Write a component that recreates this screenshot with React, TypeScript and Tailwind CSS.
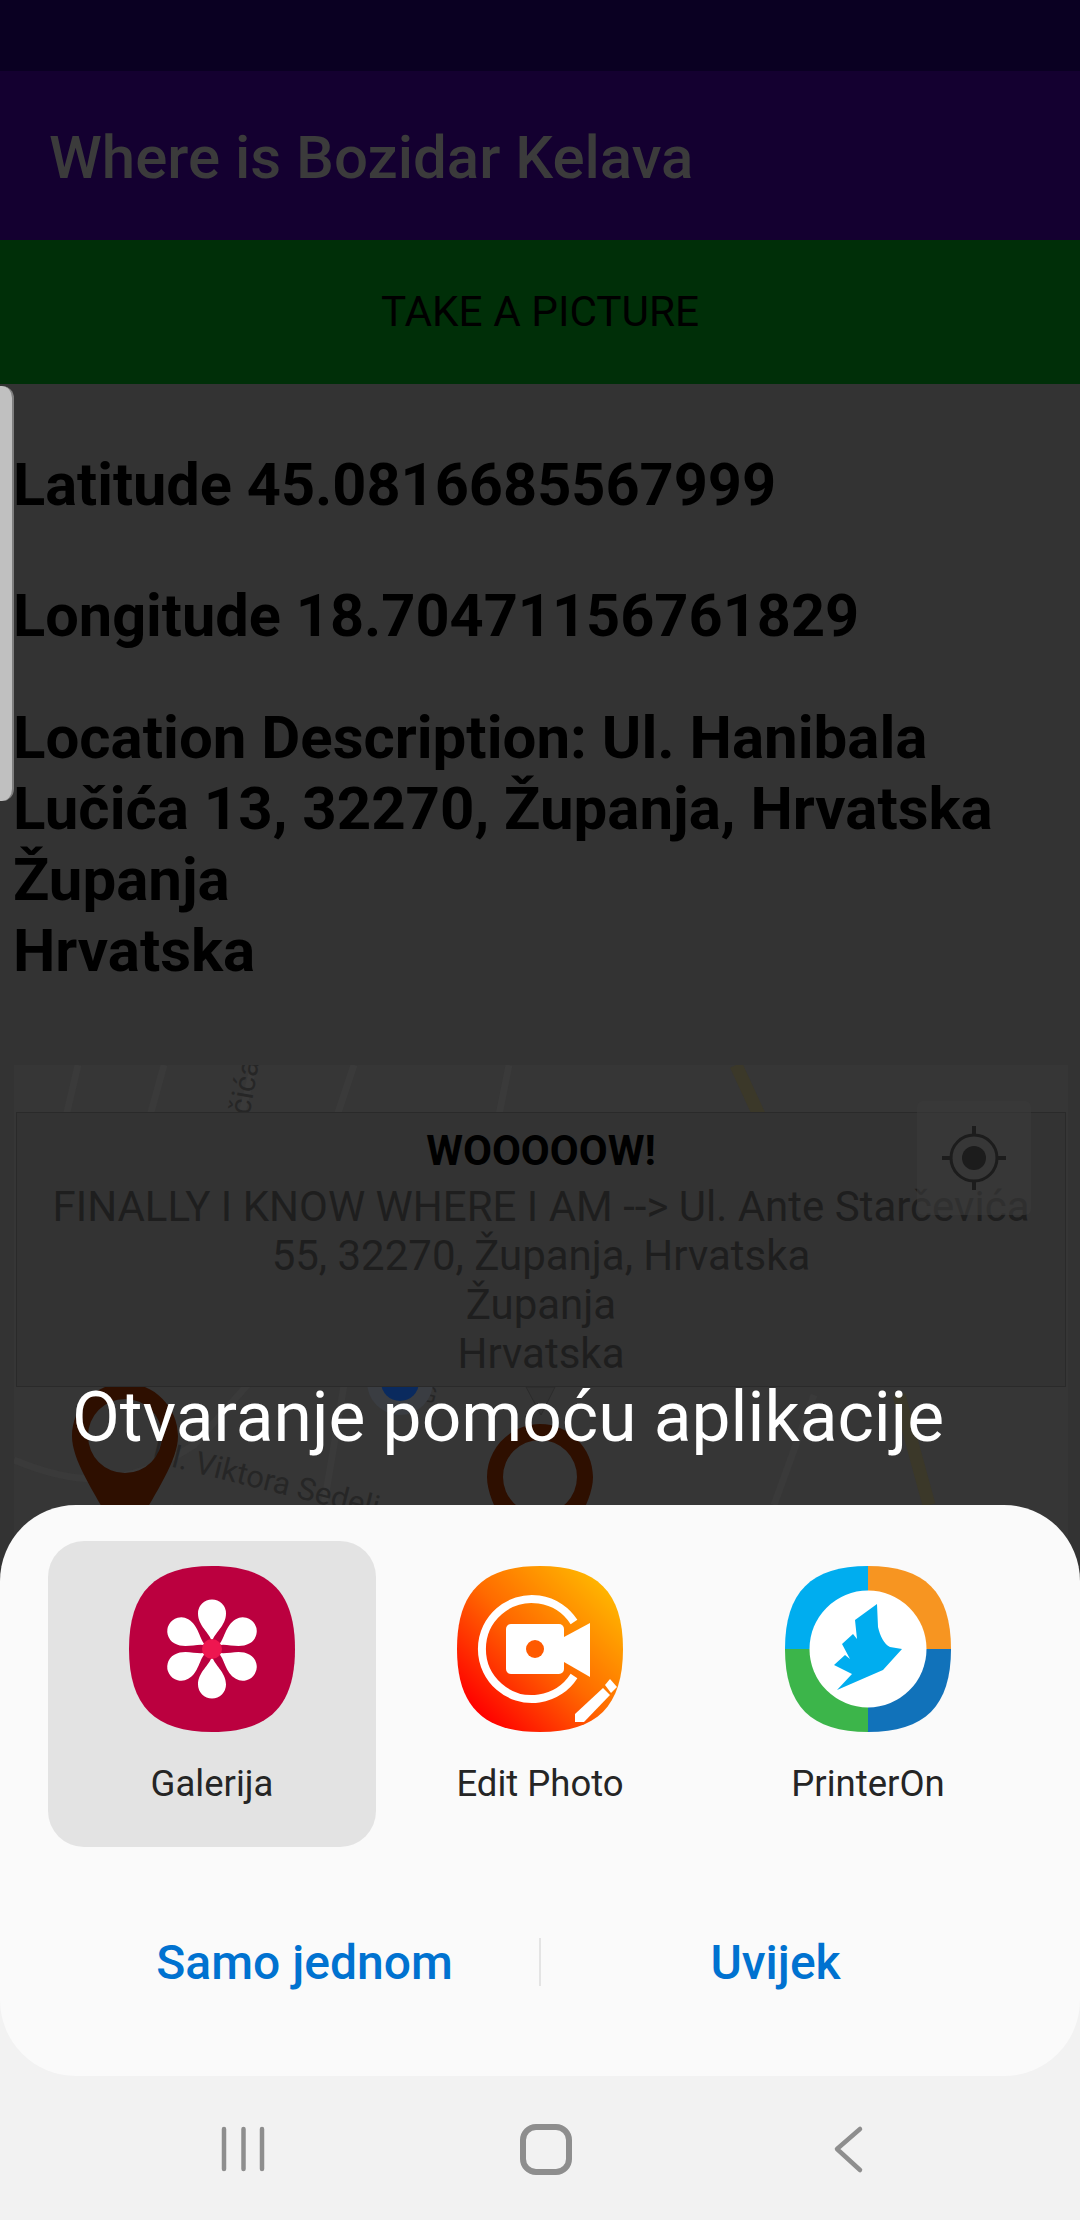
const SQUIRCLE = "M83 0C140 0 166 26 166 83C166 140 140 166 83 166C26 166 0 140 0 83C0 26 26 0 83 0Z"
const MARKER = "M0 -53C29 -53 53 -29 53 0C53 30 20 70 0 115C-20 70 -53 30 -53 0C-53 -29 -29 -53 0 -53ZM0 -37A37 37 0 1 0 0 37A37 37 0 1 0 0 -37Z"

function GalleryIcon() {
  return (
    <svg viewBox="0 0 166 166" className="w-[166px] h-[166px]">
      <path d={SQUIRCLE} fill="#bb003f" />
      {[0, 60, 120, 180, 240, 300].map((a) => (
        <path
          key={a}
          transform={`rotate(${a} 83 83)`}
          fill="#fff"
          d="M83 76C81 67 69 60 69 47.500A14 14 0 0 1 97 47.500C97 60 85 67 83 76Z"
        />
      ))}
      <circle cx="83" cy="83" r="10" fill="#ee1650" />
    </svg>
  )
}

function EditPhotoIcon() {
  return (
    <svg viewBox="0 0 166 166" className="w-[166px] h-[166px]">
      <defs>
        <linearGradient id="recorder" x1="0.12" y1="0.88" x2="0.88" y2="0.12">
          <stop offset="0" stopColor="#ff0000" />
          <stop offset="0.5" stopColor="#ff6a00" />
          <stop offset="1" stopColor="#ffb400" />
        </linearGradient>
      </defs>
      <path d={SQUIRCLE} fill="url(#recorder)" />
      <path d="M117 56A50 50 0 1 0 117 110" fill="none" stroke="#fff" strokeWidth="8" />
      <rect x="49" y="58" width="58" height="50" rx="5" fill="#fff" />
      <path d="M107 71L133 57V111L107 96Z" fill="#fff" />
      <circle cx="78" cy="83" r="9" fill="#ff5a00" />
      <path d="M118 148L146 122L153 129L127 156H118Z" fill="#fff" />
      <path d="M148 119L153 113L160 121L154 127Z" fill="#fff" />
    </svg>
  )
}

function PrinterOnIcon() {
  return (
    <svg viewBox="0 0 166 166" className="w-[166px] h-[166px]">
      <clipPath id="printer-shape">
        <path d={SQUIRCLE} />
      </clipPath>
      <g clipPath="url(#printer-shape)">
        <rect x="0" y="0" width="83" height="83" fill="#00adef" />
        <rect x="83" y="0" width="83" height="83" fill="#f79521" />
        <rect x="0" y="83" width="83" height="83" fill="#3cb54a" />
        <rect x="83" y="83" width="83" height="83" fill="#1172ba" />
      </g>
      <circle cx="83" cy="83" r="58.5" fill="#fff" />
      <path
        fill="#00adef"
        d="M92 38L93 61C95 70 99 78 105 81L117 83L98 104L52 124L67 108L49 99L60 89L65 93L57 78L68 68L72 73L70 54Z"
      />
    </svg>
  )
}

function MapRoads() {
  return (
    <svg viewBox="0 0 1054 500" className="absolute inset-0 w-full h-full">
      <g fill="none" stroke="#3a3a3a" strokeWidth="7">
        <path d="M64 0L50 60" />
        <path d="M150 0L128 80" />
        <path d="M240 0L225 60" />
        <path d="M0 395C60 420 110 425 180 380L260 290" />
        <path d="M340 0L320 60" />
        <path d="M495 0L485 50" />
        <path d="M160 440L135 500" />
        <path d="M330 320L300 500" />
        <path d="M800 330L760 440" />
      </g>
      <g fill="none" stroke="#3b3829" strokeWidth="13">
        <path d="M722 0L745 50" />
        <path d="M885 330L915 440" />
      </g>
    </svg>
  )
}

function MapMarkers() {
  return (
    <svg viewBox="0 0 1054 500" className="absolute inset-0 w-full h-full">
      <path transform="translate(111 371)" fill="#2e0f00" fillRule="evenodd" d={MARKER} />
      <path transform="translate(526 412)" fill="#2e0f00" fillRule="evenodd" d={MARKER} />
      <circle cx="386" cy="317" r="33" fill="#3a3d42" />
      <circle cx="386" cy="317" r="19" fill="#0a2a5e" />
      <path d="M512 322H541L527 350Z" fill="#333333" stroke="#2b2b2b" strokeWidth="1" />
    </svg>
  )
}

export default function App() {
  const apps = [
    { name: "Galerija", icon: <GalleryIcon />, selected: true },
    { name: "Edit Photo", icon: <EditPhotoIcon />, selected: false },
    { name: "PrinterOn", icon: <PrinterOnIcon />, selected: false },
  ]

  return (
    <div className="relative w-[1080px] h-[2220px] overflow-hidden bg-[#333333] font-['Roboto',sans-serif]">
      {/* Status + app bar */}
      <div className="h-[71px] bg-[#0a0022]" />
      <div className="h-[169px] bg-[#140030] flex items-center px-[49px]">
        <h1 className="text-[60px] font-medium text-[#3b3b3b] leading-none pt-[4px]">Where is Bozidar Kelava</h1>
      </div>
      <div className="h-[144px] bg-[#002f08] flex items-center justify-center">
        <span className="text-[42.300px] text-black leading-none">TAKE A PICTURE</span>
      </div>

      {/* Location text */}
      <div className="pl-[13px] pr-[40px] pt-[66px] text-[59.5px] font-bold leading-[71px] text-black">
        <h2 className="mb-[60px]">Latitude 45.0816685567999</h2>
        <h2 className="mb-[50px]">Longitude 18.70471156761829</h2>
        <h2 className="text-[60px]">
          Location Description: Ul. Hanibala
          <br />
          Lučića 13, 32270, Županja, Hrvatska
          <br />
          Županja
          <br />
          Hrvatska
        </h2>
      </div>

      {/* Map */}
      <div className="relative mt-[79px] ml-[14px] w-[1054px] h-[500px] bg-[#363636] overflow-hidden">
        <MapRoads />
        <div className="absolute left-[205px] top-0 w-[50px] h-[47px] overflow-hidden">
          <span className="absolute left-[-2px] top-[4px] -rotate-[80deg] text-[30px] leading-[36px] text-[#262626]">čića</span>
        </div>
        <span className="absolute left-[136px] top-[392px] rotate-[14deg] text-[31px] text-[#262626] whitespace-nowrap">
          Ul. Viktora Sedeli
        </span>
        <span className="absolute left-[408px] top-[318px] rotate-[14deg] text-[22px] leading-[24px] text-[#262626]">G</span>
        <MapMarkers />
        <div className="absolute left-[2px] top-[47px] w-[1050px] h-[275px] bg-[#333333] border border-[#2a2a2a] flex flex-col items-center pt-[15px] text-[#1e1e1e] text-[42px] leading-[49px] text-center">
          <b className="text-[42px] leading-[46px] text-black font-bold">WOOOOOW!</b>
          <span className="whitespace-nowrap mt-[8px]">FINALLY I KNOW WHERE I AM --&gt; Ul. Ante Starčevića</span>
          <span>55, 32270, Županja, Hrvatska</span>
          <span>Županja</span>
          <span>Hrvatska</span>
        </div>
        <div className="absolute left-[903px] top-[36px] w-[114px] h-[114px] rounded-[6px] bg-[#3a3a3a]/60 flex items-center justify-center">
          <svg viewBox="0 0 64 64" className="w-[64px] h-[64px]" fill="none" stroke="#1c1c1c">
            <circle cx="32" cy="32" r="23" strokeWidth="3" />
            <circle cx="32" cy="32" r="12" fill="#1c1c1c" strokeWidth="0" />
            <path d="M32 0V9M32 55V64M0 32H9M55 32H64" strokeWidth="4" />
          </svg>
        </div>
      </div>

      {/* Scroll handle */}
      <div className="absolute left-0 top-[386px] w-[14px] h-[415px] bg-[#c0c0c0] border-r-2 border-[#808080] rounded-r-[12px]" />

      {/* App chooser */}
      <div className="absolute inset-x-0 bottom-0 flex flex-col">
        <div className="pl-[72px] pb-[47px] text-[69.5px] leading-[80px] text-white">Otvaranje pomoću aplikacije</div>
        <div className="relative z-10 h-[571px] bg-[#fafafa] rounded-[76px] pt-[36px]">
          <div className="grid grid-cols-3 px-[48px]">
            {apps.map((app) => (
              <div
                key={app.name}
                className={`h-[306px] rounded-[36px] flex flex-col items-center pt-[25px] ${app.selected ? "bg-[#e3e3e3]" : ""}`}
              >
                {app.icon}
                <span className="mt-[32px] text-[36.500px] leading-[40px] text-[#252525]">{app.name}</span>
              </div>
            ))}
          </div>
          <div className="flex items-center px-[70px] mt-[92px] h-[48px]">
            <button className="flex-1 text-center text-[48px] font-medium text-[#0072d0] leading-none">Samo jednom</button>
            <div className="w-[2px] h-[48px] bg-[#e4e4e4] -mt-[2px]" />
            <button className="flex-1 text-center text-[48px] font-medium text-[#0072d0] leading-none">Uvijek</button>
          </div>
        </div>
        {/* Nav bar */}
        <div className="h-[220px] -mt-[76px] pt-[76px] bg-[#f2f2f2] relative">
          <svg viewBox="0 0 1080 144" className="w-[1080px] h-[144px]" fill="none" stroke="#8e8e8e" strokeLinecap="round">
            <path d="M224 53V93M243.500 53V93M262 53V93" strokeWidth="4.500" />
            <rect x="523" y="51" width="46" height="45" rx="13" strokeWidth="6" />
            <path d="M860 53L837 73L860 94" strokeWidth="4.500" strokeLinejoin="round" />
          </svg>
        </div>
      </div>
    </div>
  )
}
